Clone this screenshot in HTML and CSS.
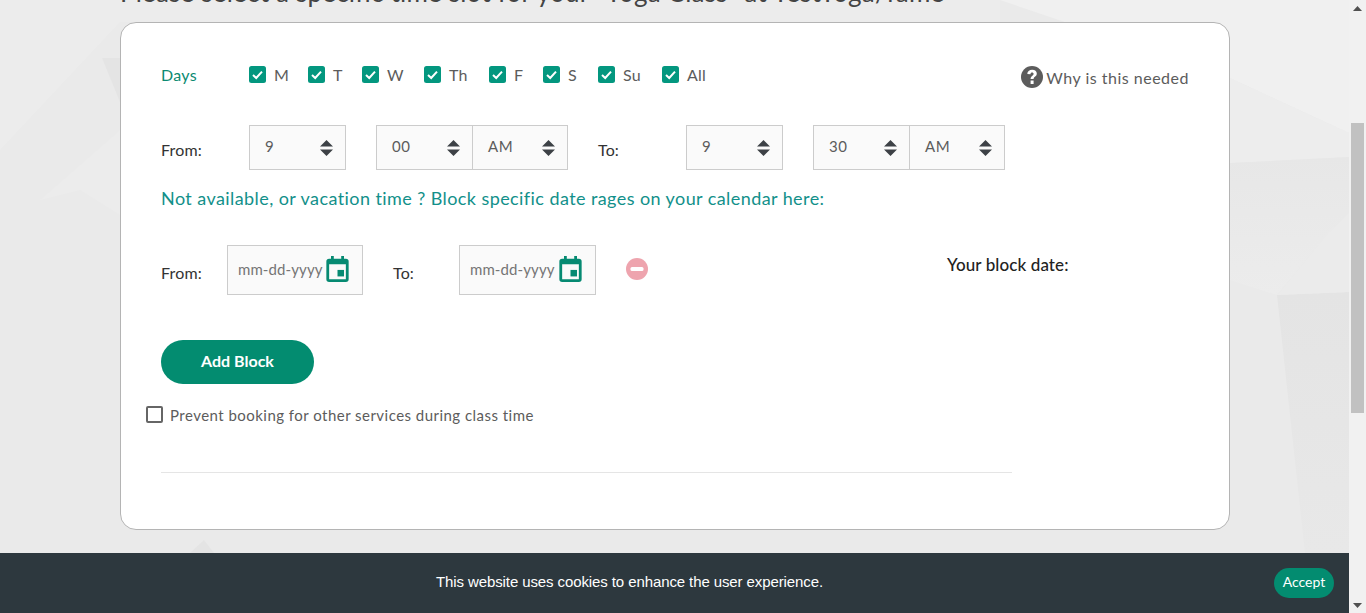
FILE: index.html
```html
<!DOCTYPE html>
<html lang="en">
	<head>
		<meta charset="UTF-8" />
		<title>Select a time slot</title>
		<link rel="stylesheet" href="styles.css">
	</head>
	<body>
		<svg class="backdrop" viewBox="0 0 1349 613" width="1349" height="613" aria-hidden="true">
			<defs>
				<linearGradient id="fadeDown" x1="0" y1="0" x2="0" y2="1">
					<stop offset="0" stop-color="#e4e4e4" />
					<stop offset="1" stop-color="#e8e8e8" />
				</linearGradient>
				<linearGradient id="bandDown" x1="0" y1="0" x2="0" y2="1">
					<stop offset="0" stop-color="#e7e7e7" />
					<stop offset="1" stop-color="#ececec" />
				</linearGradient>
			</defs>
			<rect width="1349" height="613" fill="#eaeaea" />
			<polygon points="0,0 1349,0 1349,133 1230,78 1000,0" fill="#f0f0f0" />
			<polygon points="0,0 1000,0 1000,22 120,22 0,150" fill="#ececec" />
			<polygon points="1230,78 1349,133 1349,157 1230,163" fill="#ededed" />
			<polygon points="1230,163 1349,157 1349,213 1328,233 1277,295 1230,280" fill="url(#bandDown)" />
			<polygon points="1277,295 1349,292 1349,553 1305,553" fill="url(#fadeDown)" />
			<polygon points="1349,213 1349,292 1277,295 1328,233" fill="#ebebeb" />
			<polygon points="102,58 120,58 120,102" fill="#e4e4e4" />
			<polygon points="40,200 120,130 120,215 80,190" fill="#ececec" />
			<polygon points="190,553 204,540 214,553" fill="#e4e4e4" />
		</svg>

		<div class="page">
			<main class="content">
				<h2 class="title">Please select a specific time slot for your "Yoga Class" at YestYoga/fame</h2>

				<form class="card">
					<div class="days-row">
						<span class="row-label days-label">Days</span>
						<div class="day-list">
							<label class="day"><svg class="tick" viewBox="0 0 17 17"><rect width="17" height="17" rx="2.5" fill="#03977f" /><path d="M4 9l3.2 3L13 5.6" fill="none" stroke="#fff" stroke-width="2" /></svg>M</label>
							<label class="day"><svg class="tick" viewBox="0 0 17 17"><rect width="17" height="17" rx="2.5" fill="#03977f" /><path d="M4 9l3.2 3L13 5.6" fill="none" stroke="#fff" stroke-width="2" /></svg>T</label>
							<label class="day"><svg class="tick" viewBox="0 0 17 17"><rect width="17" height="17" rx="2.5" fill="#03977f" /><path d="M4 9l3.2 3L13 5.6" fill="none" stroke="#fff" stroke-width="2" /></svg>W</label>
							<label class="day"><svg class="tick" viewBox="0 0 17 17"><rect width="17" height="17" rx="2.5" fill="#03977f" /><path d="M4 9l3.2 3L13 5.6" fill="none" stroke="#fff" stroke-width="2" /></svg>Th</label>
							<label class="day"><svg class="tick" viewBox="0 0 17 17"><rect width="17" height="17" rx="2.5" fill="#03977f" /><path d="M4 9l3.2 3L13 5.6" fill="none" stroke="#fff" stroke-width="2" /></svg>F</label>
							<label class="day"><svg class="tick" viewBox="0 0 17 17"><rect width="17" height="17" rx="2.5" fill="#03977f" /><path d="M4 9l3.2 3L13 5.6" fill="none" stroke="#fff" stroke-width="2" /></svg>S</label>
							<label class="day"><svg class="tick" viewBox="0 0 17 17"><rect width="17" height="17" rx="2.5" fill="#03977f" /><path d="M4 9l3.2 3L13 5.6" fill="none" stroke="#fff" stroke-width="2" /></svg>Su</label>
							<label class="day"><svg class="tick" viewBox="0 0 17 17"><rect width="17" height="17" rx="2.5" fill="#03977f" /><path d="M4 9l3.2 3L13 5.6" fill="none" stroke="#fff" stroke-width="2" /></svg>All</label>
						</div>
						<div class="why">
							<svg class="why-icon" viewBox="0 0 22 22"><circle cx="11" cy="11" r="11" fill="#5c5c5c" /><path d="M6.3 8c0-2.6 2-4.3 4.9-4.3 2.8 0 4.6 1.6 4.6 3.9 0 3.2-3.2 3.2-3.2 5.4H9.6c0-3.3 3-3.4 3-5.1 0-.8-.6-1.4-1.5-1.4-1 0-1.5.6-1.7 1.7z M9.6 14.6h3v3.3h-3z" fill="#fff" /></svg>
							<span>Why is this needed</span>
						</div>
					</div>

					<div class="time-row">
						<span class="row-label time-label">From:</span>
						<div class="field field-single"><span>9</span><svg class="updown" viewBox="0 0 13 16"><path d="M6.5 0L13 6.5H0zM0 9.5h13L6.5 16z" fill="#3d4146" /></svg></div>
						<div class="field-group">
							<div class="field field-left"><span>00</span><svg class="updown" viewBox="0 0 13 16"><path d="M6.5 0L13 6.5H0zM0 9.5h13L6.5 16z" fill="#3d4146" /></svg></div>
							<div class="field field-right"><span>AM</span><svg class="updown" viewBox="0 0 13 16"><path d="M6.5 0L13 6.5H0zM0 9.5h13L6.5 16z" fill="#3d4146" /></svg></div>
						</div>
						<span class="row-label time-to">To:</span>
						<div class="field field-single"><span>9</span><svg class="updown" viewBox="0 0 13 16"><path d="M6.5 0L13 6.5H0zM0 9.5h13L6.5 16z" fill="#3d4146" /></svg></div>
						<div class="field-group">
							<div class="field field-left"><span>30</span><svg class="updown" viewBox="0 0 13 16"><path d="M6.5 0L13 6.5H0zM0 9.5h13L6.5 16z" fill="#3d4146" /></svg></div>
							<div class="field field-right"><span>AM</span><svg class="updown" viewBox="0 0 13 16"><path d="M6.5 0L13 6.5H0zM0 9.5h13L6.5 16z" fill="#3d4146" /></svg></div>
						</div>
					</div>

					<p class="block-note">Not available, or vacation time ? Block specific date rages on your calendar here:</p>

					<div class="date-row">
						<span class="row-label date-label">From:</span>
						<div class="date-field">
							<span>mm-dd-yyyy</span>
							<svg class="calendar" viewBox="0 0 24 28"><path d="M5 0h3v3h8V0h3v3h2a3 3 0 0 1 3 3v19a3 3 0 0 1-3 3H3a3 3 0 0 1-3-3V6a3 3 0 0 1 3-3h2zM3 9v16h18V9z" fill="#068a72" /><rect x="12" y="15" width="7" height="7" fill="#068a72" /></svg>
						</div>
						<span class="row-label date-label date-to">To:</span>
						<div class="date-field date-field-wide">
							<span>mm-dd-yyyy</span>
							<svg class="calendar" viewBox="0 0 24 28"><path d="M5 0h3v3h8V0h3v3h2a3 3 0 0 1 3 3v19a3 3 0 0 1-3 3H3a3 3 0 0 1-3-3V6a3 3 0 0 1 3-3h2zM3 9v16h18V9z" fill="#068a72" /><rect x="12" y="15" width="7" height="7" fill="#068a72" /></svg>
						</div>
						<svg class="remove" viewBox="0 0 22 22"><circle cx="11" cy="11" r="11" fill="#eea4ae" /><rect x="4.5" y="9" width="13" height="4" rx="1.5" fill="#fff" /></svg>
						<span class="block-date">Your block date:</span>
					</div>

					<button type="button" class="add-btn">Add Block</button>

					<label class="prevent"><span class="empty-box"></span>Prevent booking for other services during class time</label>

					<hr class="divider" />
				</form>
			</main>

			<aside class="scrollbar">
				<svg class="scroll-arrow" viewBox="0 0 9 5"><path d="M4.5 0L9 5H0z" fill="#505050" /></svg>
				<div class="scroll-thumb"></div>
				<svg class="scroll-arrow scroll-arrow-down" viewBox="0 0 9 5"><path d="M0 0h9L4.5 5z" fill="#505050" /></svg>
			</aside>
		</div>

		<div class="cookie-bar">
			<span class="cookie-text">This website uses cookies to enhance the user experience.</span>
			<button type="button" class="accept-btn">Accept</button>
		</div>
	</body>
</html>
```

FILE: styles.css
```css
html,
body {
	margin: 0;
	height: 613px;
	overflow: hidden;
}
body {
	position: relative;
	font-family: Lato, "Open Sans", sans-serif;
	color: #5c5c5c;
}
.backdrop {
	position: absolute;
	top: 0;
	left: 0;
}
.page {
	position: relative;
	display: flex;
	height: 613px;
}
.content {
	flex: 1;
	padding-left: 120px;
}
.title {
	margin: -26px 0 12px 0;
	height: 36px;
	font-size: 26px;
	line-height: 36px;
	font-weight: 400;
	letter-spacing: 0.2px;
	color: #444;
	white-space: nowrap;
}
.card {
	box-sizing: border-box;
	width: 1110px;
	height: 508px;
	padding: 43px 40px 0;
	background: #fff;
	border: 1px solid #b4b4b4;
	border-radius: 16px;
}
.row-label {
	font-size: 16px;
	letter-spacing: 0.15px;
	color: #333;
}
.days-row {
	display: flex;
	align-items: flex-start;
}
.days-label {
	width: 88px;
	margin-top: -1px;
	color: #0c8a72;
	line-height: 20px;
	letter-spacing: 0.3px;
}
.day-list {
	display: grid;
	grid-template-columns: 59px 54px 62px 65px 54px 55px 64px auto;
}
.day {
	display: flex;
	align-items: center;
	gap: 8px;
	height: 17px;
	font-size: 16px;
	line-height: 15px;
	letter-spacing: 0.2px;
}
.tick {
	width: 17px;
	height: 17px;
}
.why {
	display: flex;
	align-items: center;
	gap: 3px;
	margin: 0 0 0 auto;
	font-size: 16px;
	letter-spacing: 0.5px;
}
.why-icon {
	width: 22px;
	height: 22px;
}
.time-row {
	display: flex;
	align-items: flex-start;
	margin-top: 37px;
}
.time-label,
.time-to {
	width: 88px;
	margin-top: 15px;
	line-height: 20px;
}
.time-to {
	margin-left: 30px;
}
.field {
	box-sizing: border-box;
	display: flex;
	align-items: center;
	justify-content: space-between;
	width: 97px;
	height: 45px;
	padding: 0 12px 0 15px;
	background: #fafafa;
	border: 1px solid #ccc;
	font-size: 15px;
	letter-spacing: 0.5px;
}
.field span {
	margin-top: -3px;
}
.field-group {
	display: flex;
	margin-left: 30px;
}
.field-right {
	width: 96px;
	margin-left: -1px;
}
.updown {
	width: 13px;
	height: 16px;
}
.block-note {
	margin: 17px 0 0;
	font-size: 18px;
	line-height: 22px;
	letter-spacing: 0.42px;
	color: #12908a;
}
.date-row {
	display: flex;
	align-items: flex-start;
	margin-top: 36px;
}
.date-label {
	width: 66px;
	margin-top: 18px;
	line-height: 20px;
}
.date-to {
	margin-left: 30px;
}
.date-field {
	box-sizing: border-box;
	display: flex;
	align-items: center;
	justify-content: space-between;
	width: 136px;
	height: 50px;
	padding: 0 13px 0 10px;
	background: #fafafa;
	border: 1px solid #ccc;
	font-size: 15px;
	letter-spacing: 0.1px;
	color: #757575;
}
.date-field span {
	margin-top: -2px;
}
.date-field-wide {
	width: 137px;
}
.calendar {
	width: 23px;
	height: 26px;
	margin-top: -2px;
}
.remove {
	width: 22px;
	height: 22px;
	margin: 13px 0 0 30px;
}
.block-date {
	margin: 10px 0 0 299px;
	font-size: 17px;
	line-height: 20px;
	font-weight: 500;
	letter-spacing: 0.1px;
	color: #222;
}
.add-btn {
	display: block;
	width: 153px;
	height: 44px;
	margin-top: 45px;
	padding: 0 0 3px;
	background: #038c70;
	color: #fff;
	border: none;
	border-radius: 22px;
	font-family: inherit;
	font-size: 16px;
	font-weight: 700;
}
.prevent {
	display: flex;
	align-items: center;
	gap: 7px;
	margin: 22px 0 0 -15px;
	height: 17px;
	font-size: 15px;
	letter-spacing: 0.47px;
}
.empty-box {
	box-sizing: border-box;
	width: 17px;
	height: 17px;
	border: 2px solid #666;
	border-radius: 2px;
}
.divider {
	width: 851px;
	margin: 49px 0 0;
	border: none;
	border-top: 1px solid #e5e5e5;
}
.scrollbar {
	position: relative;
	width: 17px;
	background: #f1f1f1;
	display: flex;
	flex-direction: column;
	align-items: center;
}
.scroll-arrow {
	width: 9px;
	height: 5px;
	margin-top: 6px;
}
.scroll-thumb {
	width: 13px;
	height: 290px;
	margin-top: 112px;
	background: #c1c1c1;
}
.scroll-arrow-down {
	margin-top: 190px;
}
.cookie-bar {
	position: absolute;
	left: 0;
	bottom: 0;
	box-sizing: border-box;
	width: 1349px;
	height: 60px;
	display: flex;
	align-items: center;
	justify-content: center;
	background: #2d383e;
	padding: 0 90px 3px 0;
}
.cookie-text {
	font-family: "Liberation Sans", Arial, sans-serif;
	font-size: 15px;
	letter-spacing: -0.1px;
	color: #fff;
}
.accept-btn {
	position: absolute;
	right: 15px;
	top: 15px;
	width: 60px;
	height: 30px;
	padding: 0 0 3px;
	background: #038c70;
	color: #fff;
	border: none;
	border-radius: 15px;
	font-family: inherit;
	font-size: 14px;
}
```
